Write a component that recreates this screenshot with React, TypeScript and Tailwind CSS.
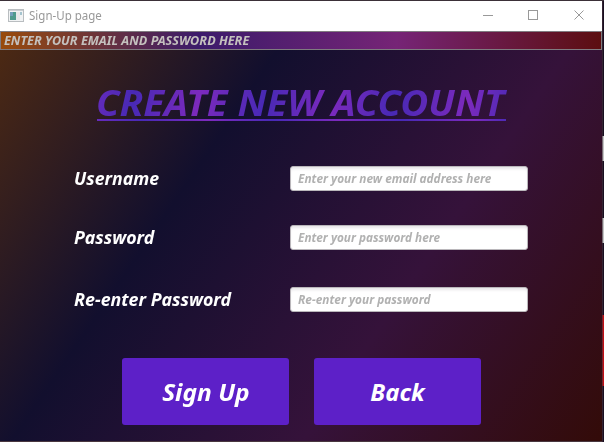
import React from 'react';

type FieldProps = { label: string; hint: string; labelFit: string; hintFit: string };

function Field({ label, hint, labelFit, hintFit }: FieldProps) {
  return (
    <div className="flex h-[25px] items-center">
      <label className="w-[216px] shrink-0 text-[18px] font-bold italic leading-[25px] text-white">
        <span className={`inline-block origin-left whitespace-nowrap ${labelFit}`}>{label}</span>
      </label>
      <div className="h-[25px] w-[238px] shrink-0 rounded-[3px] border border-[#bab7bb] bg-white pl-[7px] text-[12px] font-bold italic leading-[23px] text-[#b1b1b1] shadow-[inset_0_3px_3px_-1px_#e7e5e8]">
        <span className={`inline-block origin-left whitespace-nowrap ${hintFit}`}>{hint}</span>
      </div>
    </div>
  );
}

function TitleBar() {
  return (
    <header className="flex h-[30px] items-center bg-white pl-2">
      <svg width="16" height="14" viewBox="0 0 16 14" className="shrink-0" shapeRendering="crispEdges">
        <rect x="0.5" y="0.5" width="15" height="12" fill="#f1f3f4" stroke="#b9bdc0" />
        <rect x="1" y="1" width="14" height="1" fill="#c8cdd1" />
        <rect x="2" y="3" width="6" height="8" fill="#4d9a8c" />
        <rect x="2" y="3" width="3" height="4" fill="#719fba" />
        <rect x="8" y="3" width="4" height="8" fill="#e5e8e9" />
        <rect x="12" y="3" width="2" height="3" fill="#a5c4cf" />
      </svg>
      <span className="ml-[5px] inline-block flex-1 origin-left scale-x-[0.96] whitespace-nowrap text-[12px] font-normal text-[#999]">Sign-Up page</span>
      <svg width="104" height="12" viewBox="0 0 104 12" className="relative -top-px mr-[15px] shrink-0" fill="none" stroke="#999">
        <path d="M0 6.500h10M45.500 1.500h9v9h-9z" shapeRendering="crispEdges" />
        <path d="M91.500 1.500l9 9M100.500 1.500l-9 9" />
      </svg>
    </header>
  );
}

export default function App() {
  return (
    <div className="relative h-[442px] w-[604px] overflow-hidden bg-[#190e20] pt-px font-['Noto_Sans','Open_Sans',sans-serif]">
      <div className="absolute inset-x-0 top-0 h-px bg-[#3b3038]" />
      <div className="absolute right-0 top-[136px] h-[25px] w-[2px] bg-[#c5c5c5]" />
      <div className="absolute right-0 top-[218px] h-[25px] w-[2px] bg-[#c5c5c5]" />
      <div className="absolute right-0 top-[315px] h-[71px] w-[2px] bg-[#c10d12]" />
      <div className="absolute right-[1px] top-0 h-full w-px bg-[#44323f]/60" />
      <main className="w-[602px]">
        <TitleBar />
        <div className="flex h-[410px] flex-col bg-[linear-gradient(124.300deg,#4e2a12_0%,#120f2e_33%,#35123a_66%,#330b08_100%)]">
          <div className="h-[19px] border border-[#807b80] bg-[linear-gradient(92deg,#994b0c_0%,#3c1b6b_33%,#762476_66%,#5c0e10_100%)] pl-[3px] text-[12px] font-bold italic leading-[17px] text-[#c4c1be]">
            <span className="inline-block origin-left scale-x-[1.05] whitespace-nowrap">ENTER YOUR EMAIL AND PASSWORD HERE</span>
          </div>
          <h1 className="ml-[96px] mt-[27px] h-[42px] w-[390px] shrink-0 origin-left scale-x-[1.065] whitespace-nowrap bg-[linear-gradient(98deg,#652bbb_0px,#4829b5_37px,#7c2abd_99px,#4829b5_160px,#7c2abd_222px,#4829b5_281px,#7c2abd_349px,#4e2ab6_390px)] bg-clip-text text-[36px] font-bold italic leading-[51px] text-transparent">
            CREATE NEW ACCOUNT
          </h1>
          <div className="ml-[97px] h-[2px] w-[409px] shrink-0 bg-[linear-gradient(90deg,#652bbb_0px,#4829b5_45px,#7c2abd_111px,#4829b5_176px,#7c2abd_242px,#4829b5_305px,#7c2abd_377px,#4e2ab6_409px)]" />
          <div className="ml-[74px] mt-[45px] flex flex-col">
            <Field label="Username" hint="Enter your new email address here" labelFit="scale-x-[0.983]" hintFit="scale-x-[0.985]" />
            <div className="h-[34px]" />
            <Field label="Password" hint="Enter your password here" labelFit="scale-x-[0.985]" hintFit="scale-x-[0.98]" />
            <div className="h-[37px]" />
            <Field label="Re-enter Password" hint="Re-enter your password" labelFit="scale-x-[0.988]" hintFit="scale-x-[0.985]" />
          </div>
          <div className="ml-[122px] mt-[46px] flex gap-[25px] text-[24px] font-bold italic text-white">
            <button className="h-[67px] w-[167px] rounded-[3px] bg-[#5d20c8]"><span className="inline-block scale-x-[1.02]">Sign Up</span></button>
            <button className="h-[67px] w-[167px] rounded-[3px] bg-[#5d20c8]"><span className="inline-block">Back</span></button>
          </div>
        </div>
        <div className="h-px bg-[#49373f]" />
      </main>
    </div>
  );
}
